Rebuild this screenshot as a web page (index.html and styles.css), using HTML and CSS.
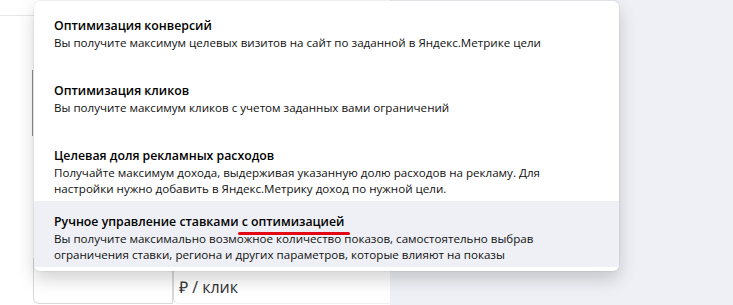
FILE: index.html
```html
<!DOCTYPE html>
<html lang="ru">
<head>
  <meta charset="UTF-8">
  <meta name="viewport" content="width=device-width, initial-scale=1.0">
  <title>Стратегия</title>
  <link rel="stylesheet" href="styles.css">
</head>
<body>
  <div class="page">
    <div class="main">
      <div class="topbar"></div>
      <div class="field"></div>
      <div class="bid-group">
        <div class="bid-input"></div>
        <div class="bid-unit">₽ / клик</div>
      </div>
    </div>
    <div class="aside"></div>
  </div>

  <div class="popup">
    <div class="item">
      <div class="item-title">Оптимизация конверсий</div>
      <div class="item-text">Вы получите максимум целевых визитов на сайт по заданной в Яндекс.Метрике цели</div>
    </div>
    <div class="item">
      <div class="item-title">Оптимизация кликов</div>
      <div class="item-text">Вы получите максимум кликов с учетом заданных вами ограничений</div>
    </div>
    <div class="item">
      <div class="item-title">Целевая доля рекламных расходов</div>
      <div class="item-text">Получайте максимум дохода, выдерживая указанную долю расходов на рекламу. Для настройки нужно добавить в Яндекс.Метрику доход по нужной цели.</div>
    </div>
    <div class="item item-active">
      <div class="item-title">Ручное управление ставками <span class="mark">с оптимизацией</span></div>
      <div class="item-text">Вы получите максимально возможное количество показов, самостоятельно выбрав ограничения ставки, региона и других параметров, которые влияют на показы</div>
    </div>
  </div>
</body>
</html>
```

FILE: styles.css
```css
body {
  margin: 0;
  font-family: "Open Sans", Arial, sans-serif;
  color: #000;
  background: #fff;
  overflow: hidden;
}
.page {
  display: grid;
  grid-template-columns: 390px 1fr;
  height: 305px;
}
.main {
  display: flex;
  flex-direction: column;
}
.topbar {
  height: 15px;
  border-bottom: 1px solid #e6e6e6;
}
.field {
  margin: 54px 0 0 32px;
  height: 66px;
  border-left: 1px solid #8c8c8c;
}
.bid-group {
  margin: auto 0 1px 33px;
  height: 46px;
  display: flex;
}
.bid-input {
  width: 138px;
  border: 1px solid #d9d9d9;
  border-top: none;
  border-radius: 0 0 0 6px;
}
.bid-unit {
  flex: 1;
  border-left: 1px solid #d9d9d9;
  border-bottom: 1px solid #f0f0f0;
  border-radius: 0 0 0 6px;
  padding: 18px 0 0 5px;
  font-size: 16px;
  color: #333;
}
.aside {
  background: #eef0f5;
}
.popup {
  position: absolute;
  left: 34px;
  top: 1px;
  width: 585px;
  padding: 4px 0;
  background: #fff;
  border-radius: 6px;
  box-shadow: 0 0 0 1px rgba(0, 0, 0, 0.04), 0 8px 18px rgba(0, 0, 0, 0.18);
}
.item {
  min-height: 65px;
  box-sizing: border-box;
  padding: 12px 20px 4px;
}
.item-active {
  background: #eef0f5;
}
.item-title {
  font-size: 12.3px;
  font-weight: 600;
  line-height: 18px;
}
.item-text {
  font-size: 11.6px;
  line-height: 16px;
  color: #111;
  max-width: 520px;
}
.mark {
  position: relative;
}
.mark::after {
  content: "";
  position: absolute;
  left: -4px;
  right: -6px;
  bottom: -5px;
  height: 3px;
  background: #e30613;
  border-radius: 2px;
}
```
